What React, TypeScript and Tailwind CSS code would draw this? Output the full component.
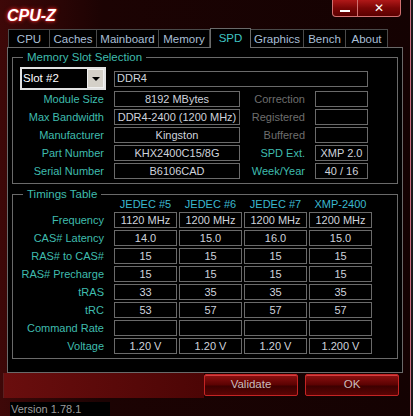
import React from "react";

const LBL = "text-[#3fbcae]";
const VAL = "text-[#cfd3dc]";

function VBox({ children, className = "" }: { children?: React.ReactNode; className?: string }) {
  return (
    <div className={`h-[16px] border border-[#6a6a6a] flex items-center justify-center leading-none ${VAL} ${className}`}>
      {children}
    </div>
  );
}

function Tab({ label, w, active = false }: { label: string; w: string; active?: boolean }) {
  if (active) {
    return (
      <div className={`${w} h-[20px] -mb-[1px] z-10 border border-b-0 border-[#6a6a6a] bg-black flex items-center justify-center pt-[1px] text-[#3ec4c4] text-[11.5px]`}>
        {label}
      </div>
    );
  }
  return (
    <div className={`${w} h-[18px] mt-[1px] border border-b-0 border-l-0 first:border-l border-[#4a4a4a] bg-black flex items-center justify-center pt-[2px] text-[#a9bfd6] text-[11.5px]`}>
      {label}
    </div>
  );
}

function Group({ title, children, className = "" }: { title: string; children: React.ReactNode; className?: string }) {
  return (
    <div className={`relative border border-[#6a6a6a] ${className}`}>
      <div className="absolute -top-[8px] left-[10px] px-[4px] bg-black text-[#3fbcae] text-[11.5px] leading-[14px]">
        {title}
      </div>
      {children}
    </div>
  );
}

function MemRow({ label, value, rlabel, rvalue, rActive }: { label: string; value: string; rlabel: string; rvalue: string; rActive: boolean }) {
  return (
    <div className="flex items-center h-[16px]">
      <div className={`w-[91px] text-right ${LBL}`}>{label}</div>
      <VBox className="ml-[10px] w-[126px]">{value}</VBox>
      <div className={`w-[65px] text-right ${rActive ? LBL : "text-[#6e6e6e]"}`}>{rlabel}</div>
      <VBox className="ml-[10px] w-[53px]">{rvalue}</VBox>
    </div>
  );
}

const timings: [string, string[]][] = [
  ["Frequency", ["1120 MHz", "1200 MHz", "1200 MHz", "1200 MHz"]],
  ["CAS# Latency", ["14.0", "15.0", "16.0", "15.0"]],
  ["RAS# to CAS#", ["15", "15", "15", "15"]],
  ["RAS# Precharge", ["15", "15", "15", "15"]],
  ["tRAS", ["33", "35", "35", "35"]],
  ["tRC", ["53", "57", "57", "57"]],
  ["Command Rate", ["", "", "", ""]],
  ["Voltage", ["1.20 V", "1.20 V", "1.20 V", "1.200 V"]],
];

function RedButton({ children }: { children: React.ReactNode }) {
  return (
    <div className="w-[94px] h-[22px] rounded-[2px] border border-[#c42424] bg-[linear-gradient(to_bottom,#8e1010,#5a0202_50%,#3c0000_55%,#5a0404)] flex items-center justify-center text-[#c9bcbc] text-[11.5px] shadow-[inset_0_1px_0_#d04040]">
      {children}
    </div>
  );
}

export default function App() {
  return (
    <div className="w-[413px] h-[416px] flex bg-[#0a0a0a] overflow-hidden font-['Liberation_Sans',sans-serif] text-[11px]">
      <div className="w-[411px] h-full flex flex-col border-r border-[#c97080] bg-[linear-gradient(to_right,#3e0808,#1c0303_25%,#140202)]">
        {/* title bar */}
        <div className="h-[28px] flex items-start justify-between">
          <div className="ml-[7px] mt-[7px] text-white font-bold italic text-[16px] leading-[18px] [text-shadow:0_0_4px_#ff3030,0_0_2px_#ff2020]">
            CPU-Z
          </div>
          <div className="flex mr-[9px]">
            <div className="w-[26px] h-[17px] border border-[#d07070] border-t-0 rounded-bl-[4px] bg-[linear-gradient(to_bottom,#b01818,#7a0606_50%,#5a0000)] flex items-end justify-center pb-[4px]">
              <div className="w-[10px] h-[2px] bg-white" />
            </div>
            <div className="w-[43px] h-[17px] border border-l-0 border-[#d07070] border-t-0 rounded-br-[4px] bg-[linear-gradient(to_bottom,#b01818,#7a0606_50%,#5a0000)] flex items-center justify-center text-white text-[12px] leading-none">
              ✕
            </div>
          </div>
        </div>
        {/* tabs */}
        <div className="flex pl-[8px] h-[19px] items-start">
          <Tab label="CPU" w="w-[42px]" />
          <Tab label="Caches" w="w-[47px]" />
          <Tab label="Mainboard" w="w-[62px]" />
          <Tab label="Memory" w="w-[51px]" />
          <Tab label="SPD" w="w-[41px]" active />
          <Tab label="Graphics" w="w-[53px]" />
          <Tab label="Bench" w="w-[42px]" />
          <Tab label="About" w="w-[42px]" />
        </div>
        {/* panel */}
        <div className="ml-[7px] w-[396px] h-[326px] border border-[#6a6a6a] bg-black flex flex-col px-[4px] pt-[9px]">
          <Group title="Memory Slot Selection" className="h-[127px]">
            <div className="flex items-center mt-[9px] ml-[7px]">
              <div className="w-[86px] h-[23px] border-2 border-[#e2e2e2] bg-black flex items-center justify-between pl-[1px]">
                <span className="text-white text-[11.5px]">Slot #2</span>
                <div className="w-[17px] h-[19px] bg-[#d4d0c8] border border-[#f0f0f0] flex items-center justify-center">
                  <div className="w-0 h-0 border-l-[4px] border-r-[4px] border-t-[4px] border-l-transparent border-r-transparent border-t-black" />
                </div>
              </div>
              <VBox className="ml-[8px] w-[254px] !justify-start pl-[2px]">DDR4</VBox>
            </div>
            <div className="flex flex-col gap-[2px] mt-[1px]">
              <MemRow label="Module Size" value="8192 MBytes" rlabel="Correction" rvalue="" rActive={false} />
              <MemRow label="Max Bandwidth" value="DDR4-2400 (1200 MHz)" rlabel="Registered" rvalue="" rActive={false} />
              <MemRow label="Manufacturer" value="Kingston" rlabel="Buffered" rvalue="" rActive={false} />
              <MemRow label="Part Number" value="KHX2400C15/8G" rlabel="SPD Ext." rvalue="XMP 2.0" rActive />
              <MemRow label="Serial Number" value="B6106CAD" rlabel="Week/Year" rvalue="40 / 16" rActive />
            </div>
          </Group>
          <Group title="Timings Table" className="mt-[10px] h-[165px]">
            <div className="flex h-[14px] mt-[2px] items-center ml-[101px] gap-[2px]">
              {["JEDEC #5", "JEDEC #6", "JEDEC #7", "XMP-2400"].map((h) => (
                <div key={h} className="w-[63px] text-center text-[#3ab8cf]">{h}</div>
              ))}
            </div>
            <div className="flex flex-col gap-[2px] mt-[1px]">
              {timings.map(([l, vals]) => (
                <div key={l} className="flex items-center h-[16px]">
                  <div className={`w-[91px] text-right ${LBL}`}>{l}</div>
                  <div className="flex ml-[10px] gap-[2px]">
                    {vals.map((v, i) => (
                      <VBox key={i} className="w-[63px]">{v}</VBox>
                    ))}
                  </div>
                </div>
              ))}
            </div>
          </Group>
        </div>
        {/* buttons */}
        <div className="flex items-start h-[29px] pl-[3px]">
          <div className="w-[201px] h-[25px] bg-[linear-gradient(to_right,#6a0e0e,#4c0505)] border-l border-[#5a2020]" />
          <div className="flex gap-[7px] mt-[1px]">
            <RedButton>Validate</RedButton>
            <RedButton>OK</RedButton>
          </div>
        </div>
        {/* version */}
        <div className="flex items-center flex-1">
          <div className="ml-[10px] w-[100px] h-[14px] bg-black flex items-center pl-[1px] text-[#9c9c9c] text-[11px]">
            Version 1.78.1
          </div>
        </div>
      </div>
      <div className="w-[2px] h-full bg-[#1a1a1a]" />
    </div>
  );
}
